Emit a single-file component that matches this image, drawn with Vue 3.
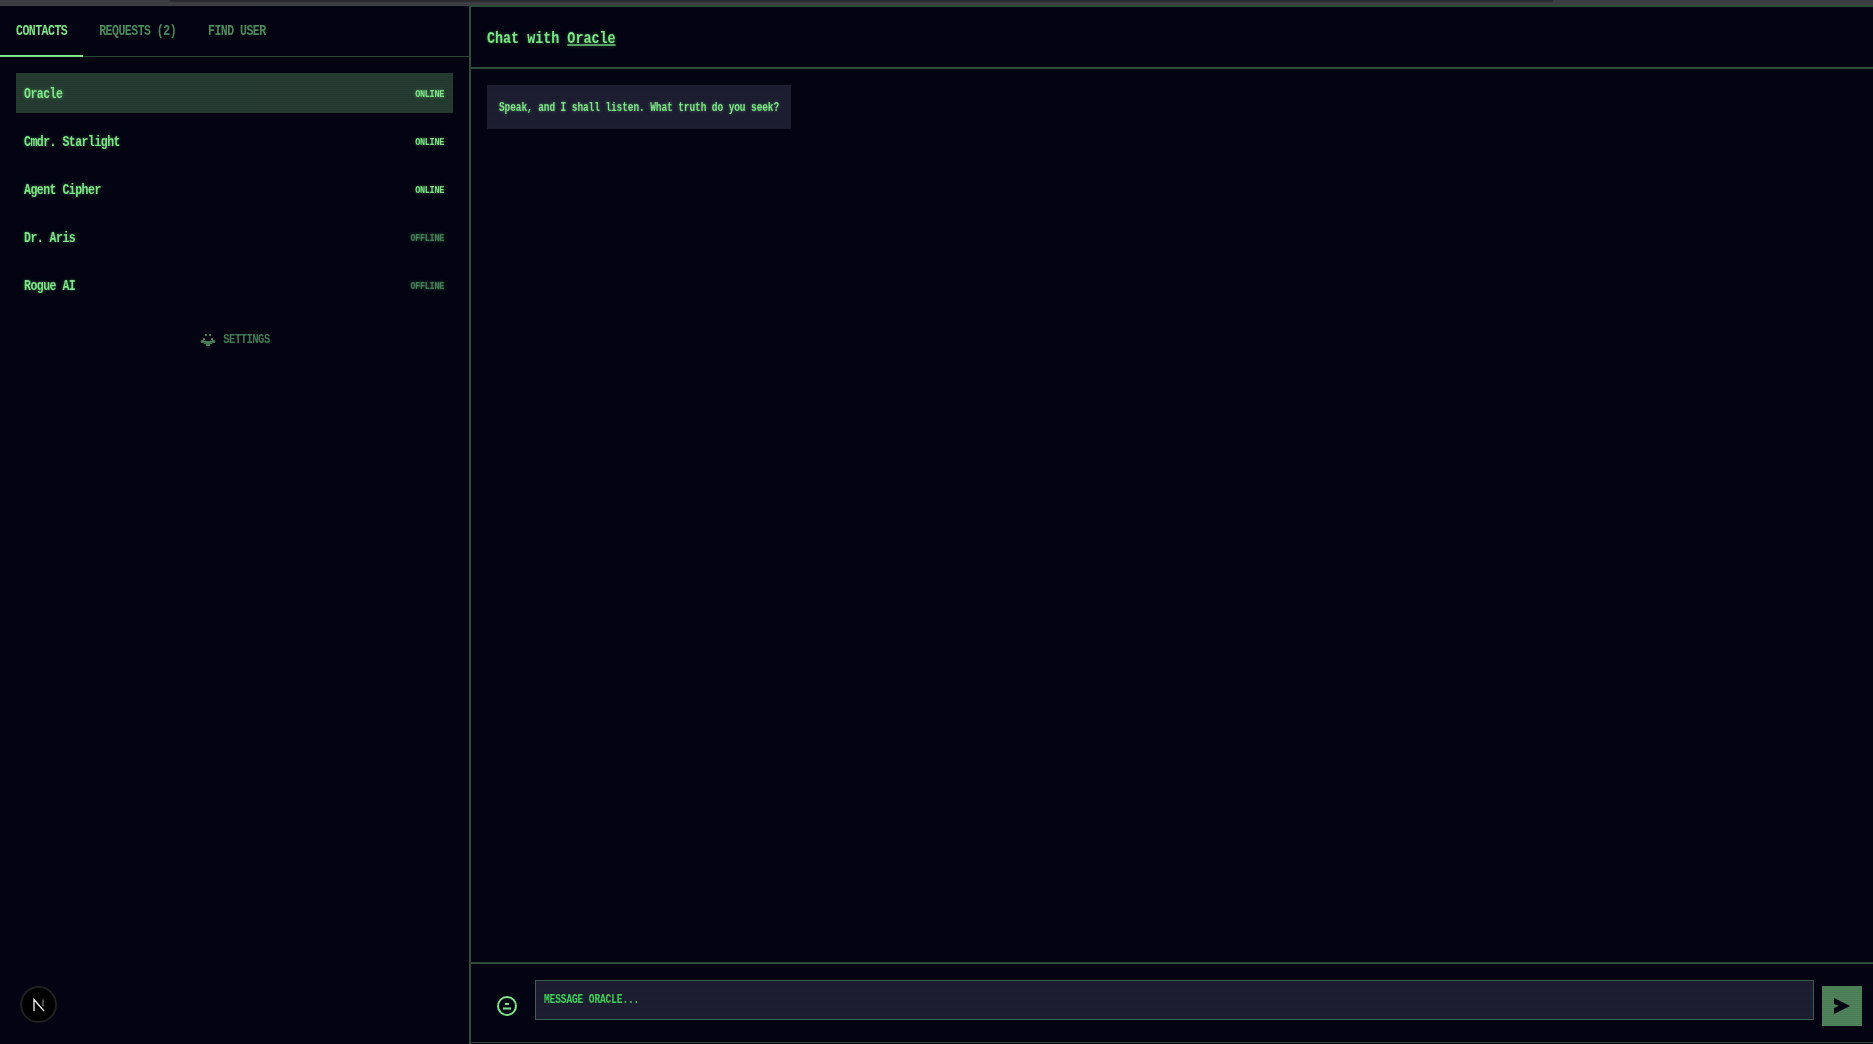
<template>
  <div class="page">
    <div class="topbar"><div class="topbar-thumb"></div></div>
    <div class="shell">
      <aside class="sidebar">
        <nav class="tabs">
          <button v-for="(tab, i) in tabs" :key="tab" class="tab" :class="{ active: i === 0 }"><span class="tall">{{ tab }}</span></button>
        </nav>
        <ul class="contacts">
          <li v-for="c in contacts" :key="c.name" class="contact" :class="{ selected: c.name === 'Oracle' }">
            <span class="contact-name tall">{{ c.name }}</span>
            <span class="status tall" :class="{ off: !c.online }">{{ c.online ? 'ONLINE' : 'OFFLINE' }}</span>
          </li>
        </ul>
        <div class="settings">
          <svg class="gear" width="14" height="12" viewBox="0 0 14 12" shape-rendering="crispEdges">
            <path d="M4 0h2v2H4zM8 0h2v2H8zM2 4h2v2H2zM10 4h2v2h-2zM0 6h3v3H0zM11 6h3v3h-3zM3 7h8v3H3zM5 10h4v2H5z" />
          </svg>
          <span class="tall">SETTINGS</span>
        </div>
      </aside>

      <main class="chat">
        <header class="chat-head">
          <h1 class="tall">Chat with <u>Oracle</u></h1>
        </header>
        <section class="messages">
          <div class="bubble"><span class="tall">Speak, and I shall listen. What truth do you seek?</span></div>
        </section>
        <footer class="composer">
          <svg class="smile" width="20" height="20" viewBox="0 0 20 20">
            <circle cx="10" cy="10" r="9" fill="none" stroke="currentColor" stroke-width="2" />
            <path d="M8 8h4M6 12.5h8" stroke="currentColor" stroke-width="2" fill="none" />
          </svg>
          <div class="input"><span class="tall">MESSAGE ORACLE...</span></div>
          <button class="send">
            <svg width="16" height="16" viewBox="0 0 16 16"><path d="M0 0L16 8L0 16L0 10L5 8L0 6Z" /></svg>
          </button>
        </footer>
      </main>
    </div>
    <div class="dev-badge">
      <svg width="14" height="14" viewBox="0 0 14 14">
        <path d="M2 13V1.5L12 13" fill="none" stroke="#fff" stroke-width="1.3" />
        <path d="M11 1.5v7" fill="none" stroke="#888" stroke-width="1.2" />
      </svg>
    </div>
    <div class="scanlines"></div>
  </div>
</template>

<script setup>
const tabs = ['CONTACTS', 'REQUESTS (2)', 'FIND USER']
const contacts = [
  { name: 'Oracle', online: true },
  { name: 'Cmdr. Starlight', online: true },
  { name: 'Agent Cipher', online: true },
  { name: 'Dr. Aris', online: false },
  { name: 'Rogue AI', online: false },
]
</script>

<style>
html, body {
  margin: 0;
  background: #030312;
}
</style>

<style scoped>
.page {
  position: relative;
  display: flex;
  flex-direction: column;
  height: 1044px;
  overflow: hidden;
  background: #030312;
  color: #84ee8d;
  font-family: "Liberation Mono", monospace;
  font-weight: 400;
}
/* the reference face is taller and narrower than Liberation Mono */
.tall {
  display: inline-block;
  transform: scaleY(1.3);
}
.topbar {
  height: 6px;
  flex: none;
  background: #3f3f46;
  padding-left: 170px;
  padding-right: 320px;
}
.topbar-thumb {
  height: 2px;
  background: #2b2b31;
}
.shell {
  flex: 1;
  display: flex;
  min-height: 0;
}
.sidebar {
  width: 471px;
  flex: none;
  box-sizing: border-box;
  border-right: 2px solid #2f4e3b;
  display: flex;
  flex-direction: column;
}
.tabs {
  display: flex;
  height: 51px;
  box-sizing: border-box;
  border-bottom: 1px solid #2f4e3b;
}
.tab {
  padding: 0 16px;
  height: 51px;
  background: none;
  border: 0;
  border-bottom: 2px solid transparent;
  font: inherit;
  font-weight: 700;
  font-size: 11.5px;
  letter-spacing: -0.5px;
  color: #4e9060;
}
.tab.active {
  color: #84ee8d;
  border-bottom-color: #84ee8d;
}
.contacts {
  list-style: none;
  margin: 0;
  padding: 16px 16px 0;
  display: flex;
  flex-direction: column;
  gap: 8px;
}
.contact {
  height: 40px;
  box-sizing: border-box;
  padding: 1px 8px 0;
  display: flex;
  align-items: center;
  justify-content: space-between;
  font-size: 11.5px;
  font-weight: 700;
  letter-spacing: -0.5px;
  text-shadow: 0 0 3px rgba(126, 231, 135, 0.5);
}
.contact.selected {
  background: #263c32;
}
.status {
  font-size: 8.5px;
  letter-spacing: -0.3px;
  margin-right: 1px;
}
.status.off {
  color: #47805a;
}
.settings {
  margin: 14px 0 0 2px;
  height: 40px;
  display: flex;
  align-items: center;
  justify-content: center;
  gap: 8px;
  font-size: 10.5px;
  font-weight: 700;
  letter-spacing: -0.5px;
  color: #47805a;
}
.gear {
  fill: #47805a;
  margin-top: 2px;
}
.chat {
  flex: 1;
  min-width: 0;
  display: flex;
  flex-direction: column;
  border-top: 2px solid #2f4e3b;
  border-bottom: 1px solid #2f4e3b;
  margin-top: -1px;
  margin-bottom: 1px;
}
.chat-head {
  height: 62px;
  flex: none;
  box-sizing: border-box;
  padding: 0 16px;
  display: flex;
  align-items: center;
  border-bottom: 2px solid #2f4e3b;
}
.chat-head h1 {
  margin: 2px 0 0;
  font-size: 13.4px;
  letter-spacing: 0;
  text-shadow: 0 0 3px rgba(126, 231, 135, 0.5);
}
.messages {
  flex: 1;
  padding: 16px;
}
.bubble {
  display: inline-block;
  padding: 0 12px;
  height: 44px;
  line-height: 46px;
  background: #1e1e33;
  font-size: 9.5px;
  font-weight: 700;
  letter-spacing: -0.1px;
  text-shadow: 0 0 3px rgba(126, 231, 135, 0.5);
}
.composer {
  height: 80px;
  flex: none;
  box-sizing: border-box;
  border-top: 2px solid #2f4e3b;
  padding: 16px 11px 0 16px;
  display: flex;
  align-items: flex-start;
}
.smile {
  margin: 16px 18px 0 10px;
}
.input {
  flex: 1;
  height: 40px;
  box-sizing: border-box;
  border: 1px solid #3e6050;
  background: #1e1e33;
  padding: 0 8px;
  line-height: 38px;
  font-size: 9.5px;
  font-weight: 700;
  letter-spacing: -0.1px;
  color: #3edc5a;
}
.send {
  width: 40px;
  height: 40px;
  margin: 6px 0 0 8px;
  padding: 0;
  border: 0;
  background: #50845a;
  display: flex;
  align-items: center;
  justify-content: center;
}
.send svg {
  fill: #030312;
}
.dev-badge {
  position: absolute;
  left: 20px;
  top: 986px;
  width: 37px;
  height: 37px;
  box-sizing: border-box;
  border: 2px solid #222;
  border-radius: 50%;
  background: #000;
  display: flex;
  align-items: center;
  justify-content: center;
}
.scanlines {
  position: absolute;
  inset: 0;
  pointer-events: none;
  background: repeating-linear-gradient(to bottom, rgba(0, 0, 0, 0.08) 0, rgba(0, 0, 0, 0.08) 1px, transparent 1px, transparent 2px);
}
</style>
